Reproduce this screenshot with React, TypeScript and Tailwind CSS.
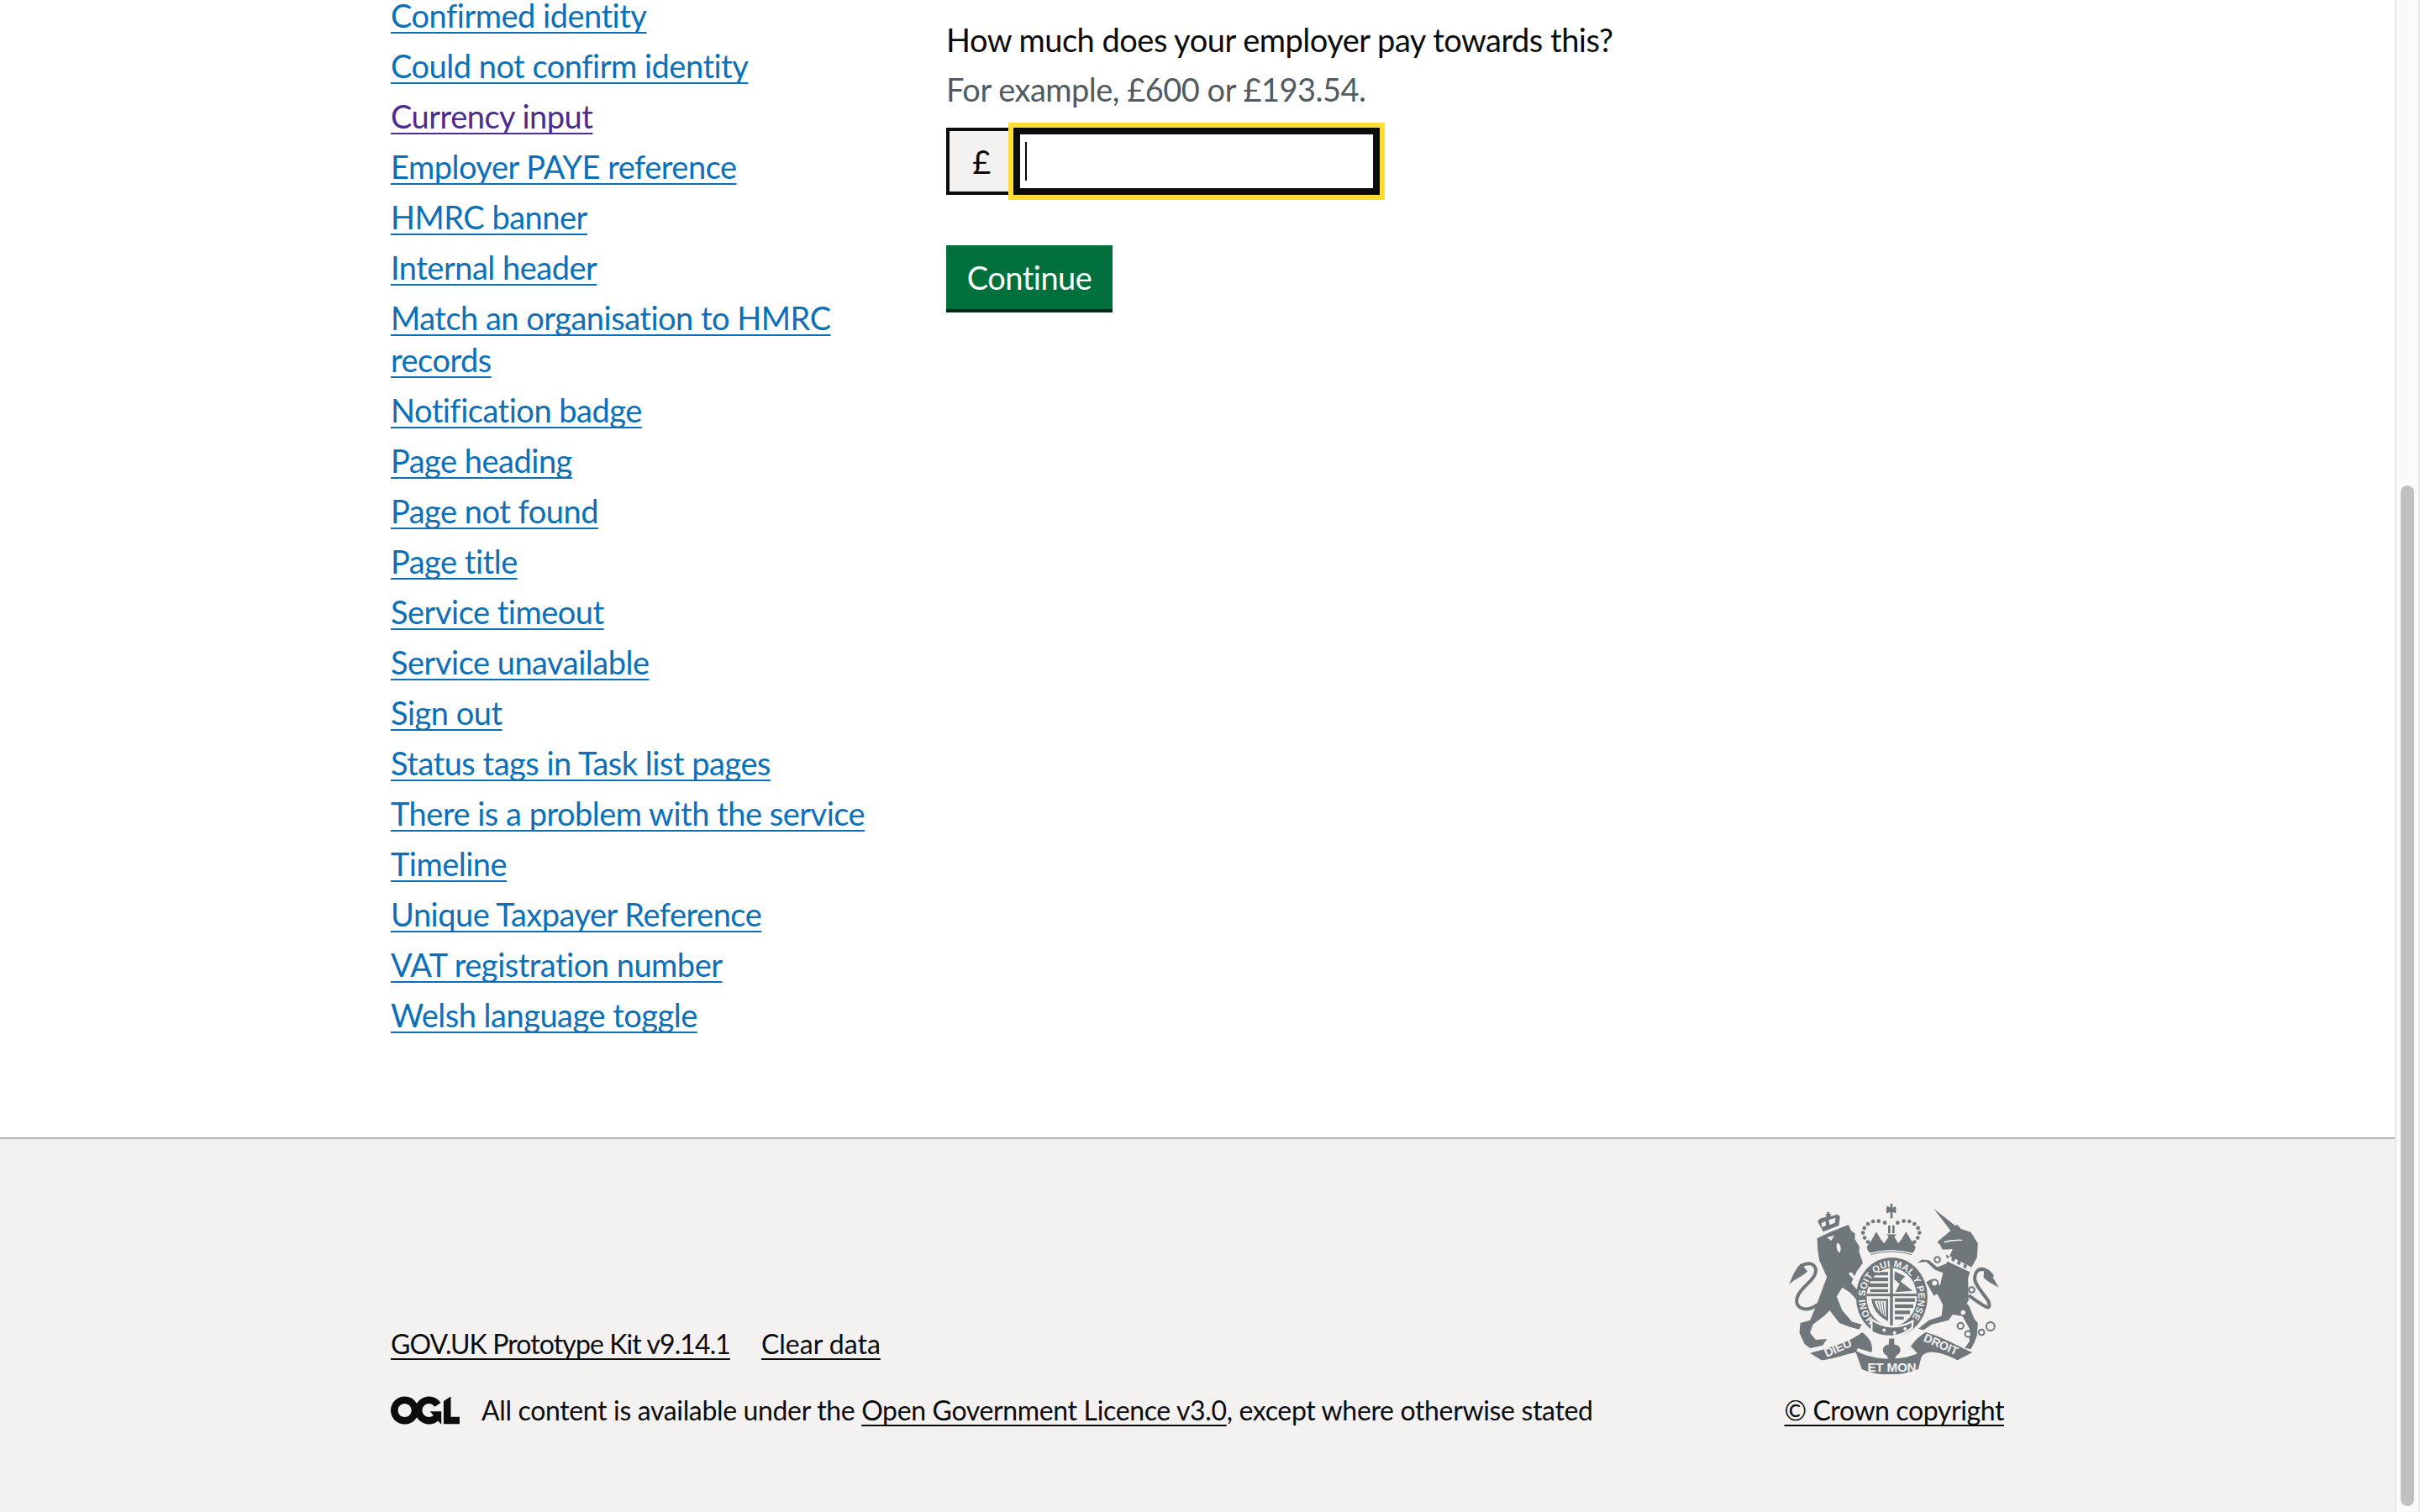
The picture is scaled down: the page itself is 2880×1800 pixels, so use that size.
const links: { label: string; visited?: boolean }[] = [
  { label: "Confirmed identity" },
  { label: "Could not confirm identity" },
  { label: "Currency input", visited: true },
  { label: "Employer PAYE reference" },
  { label: "HMRC banner" },
  { label: "Internal header" },
  { label: "Match an organisation to HMRC records" },
  { label: "Notification badge" },
  { label: "Page heading" },
  { label: "Page not found" },
  { label: "Page title" },
  { label: "Service timeout" },
  { label: "Service unavailable" },
  { label: "Sign out" },
  { label: "Status tags in Task list pages" },
  { label: "There is a problem with the service" },
  { label: "Timeline" },
  { label: "Unique Taxpayer Reference" },
  { label: "VAT registration number" },
  { label: "Welsh language toggle" },
];

const footerLink = "underline decoration-[2px] underline-offset-[5px] [text-decoration-skip-ink:none]";

function OglLogo() {
  return (
    <svg viewBox="0 0 483.2 195.7" className="h-[34px] w-[82px] shrink-0 text-[#0b0c0c]">
      <path
        fill="currentColor"
        d="M421.5 142.8V.1l-50.7 32.3v161.1h112.4v-50.7zm-122.3-9.6A47.12 47.12 0 0 1 221 97.8c0-26 21.1-47.1 47.1-47.1 16.7 0 31.4 8.7 39.7 21.8l42.7-27.2A97.63 97.63 0 0 0 268.1 0c-36.5 0-68.3 20.1-85.1 49.7A98 98 0 0 0 97.8 0C43.9 0 0 43.9 0 97.8s43.9 97.8 97.8 97.8c36.5 0 68.3-20.1 85.1-49.7a97.76 97.76 0 0 0 149.6 25.4l19.4 22.2h3v-87.8h-80l24.3 27.5zM97.8 145c-26 0-47.1-21.1-47.1-47.1s21.1-47.1 47.1-47.1 47.2 21 47.2 47S123.8 145 97.8 145"
      />
    </svg>
  );
}

function Crest() {
  const dark = "#6f777b";
  const light = "#f3f2f1";
  const crownDots = [
    [492, 176], [470, 170], [450, 171], [432, 180], [419, 195], [414, 212], [420, 230], [432, 245],
    [538, 176], [560, 170], [580, 171], [598, 180], [611, 195], [616, 212], [610, 230], [598, 245],
  ];
  const chain = [
    [680, 308, 10], [670, 392, 12], [803, 416, 10], [763, 545, 11], [790, 574, 11], [838, 568, 10], [870, 547, 15],
  ];
  return (
    <svg viewBox="150 108 750 610" className="h-[203px] w-[250px]">
      {/* lion */}
      <path
        fill={dark}
        d="M250 232 L300 208 L362 183 L372 205 L386 215 L385 235 L402 262 L400 280 L414 320 L392 350 L372 392 L395 418 L415 450 L412 466 L395 456 L368 426 L340 408 L320 440 L340 490 L375 530 L410 540 L400 558 L365 548 L330 535 L295 490 L275 510 L235 540 L225 570 L245 595 L285 592 L270 615 L225 625 L205 610 L187 570 L190 535 L225 525 L250 465 L285 370 L258 310 L252 270 Z"
      />
      <path fill="none" stroke={dark} strokeWidth="12" d="M252 468 C210 500 165 482 180 440 C195 400 250 380 245 342 C240 315 200 315 182 345" />
      <path fill={dark} d="M192 322 C170 345 160 370 150 398 C170 375 195 372 216 350 Z" />
      <path fill={light} d="M285 228 L312 222 L300 240 Z M322 248 C334 250 338 270 332 282 C322 284 316 262 322 248 Z" />
      <path fill={light} d="M362 358 L372 352 L412 400 L408 408 Z" />
      <path
        fill={dark}
        d="M252 172 C262 152 276 162 285 152 L279 146 L286 144 L286 137 L294 137 L294 144 L302 146 L296 152 C310 156 320 138 332 154 L328 186 L272 208 Z"
      />
      <path fill={light} d="M265 178 L280 170 L282 186 L268 192 Z M292 166 L316 158 L314 176 L294 184 Z" />

      {/* crown */}
      <path fill={dark} d="M506 118 L512 122 L512 108 L520 108 L520 122 L532 118 L532 142 L520 138 L520 160 L512 160 L512 138 L498 142 L498 118 Z" />
      <rect x="504" y="186" width="8" height="28" fill={dark} />
      <rect x="519" y="186" width="8" height="28" fill={dark} />
      {crownDots.map(([cx, cy]) => (
        <circle key={`${cx}-${cy}`} cx={cx} cy={cy} r="7" fill={dark} />
      ))}
      <path
        fill={dark}
        d="M428 262 L445 238 L462 208 L478 236 L490 250 L506 226 L498 218 L534 218 L526 226 L540 250 L552 236 L568 208 L586 238 L602 262 Q600 280 590 284 Q515 262 440 284 Q430 280 428 262 Z"
      />
      <path fill="none" stroke={dark} strokeWidth="3" d="M442 290 Q515 268 588 290" />

      {/* garter and shield */}
      <ellipse cx="517" cy="442" rx="128" ry="142" fill={dark} />
      <ellipse cx="517" cy="442" rx="90" ry="104" fill={light} />
      <rect x="511" y="338" width="10" height="208" fill={dark} />
      <rect x="427" y="430" width="180" height="9" fill={dark} />
      <g fill={dark}>
        <rect x="458" y="352" width="46" height="12" />
        <rect x="438" y="372" width="66" height="13" />
        <rect x="434" y="393" width="70" height="13" />
        <rect x="440" y="414" width="64" height="10" />
        <path d="M528 350 L565 368 L548 386 L592 420 L530 424 L545 395 L526 378 Z" />
        <rect x="528" y="446" width="72" height="13" />
        <rect x="528" y="468" width="66" height="13" />
        <rect x="528" y="490" width="54" height="13" />
        <rect x="528" y="512" width="32" height="10" />
      </g>
      <path fill={dark} d="M444 448 H504 V528 C475 515 450 490 444 448 Z" />
      <path fill={light} d="M456 456 L496 456 L496 512 C475 500 462 480 456 456 Z" />
      <path fill="none" stroke={dark} strokeWidth="3" d="M466 458 L478 502 M476 458 L486 506 M486 458 L491 506" />
      <path id="garter-arc" fill="none" d="M456 527 A95 109 0 1 1 578 527" />
      <text fill={light} fontSize="34" fontWeight="700" fontFamily="Liberation Sans, sans-serif">
        <textPath href="#garter-arc" textLength="490" lengthAdjust="spacing">
          HONI SOIT QUI MAL Y PENSE
        </textPath>
      </text>
      <path fill={dark} stroke={light} strokeWidth="7" d="M445 522 C490 555 545 555 592 528 L590 552 C545 590 490 590 445 566 Z" />
      <circle cx="490" cy="560" r="6" fill={light} />
      <circle cx="527" cy="570" r="6" fill={light} />
      <circle cx="565" cy="556" r="6" fill={light} />

      {/* unicorn */}
      <path fill={dark} d="M667 125 L748 190 L728 205 Z" />
      <path
        fill={dark}
        d="M680 245 L726 206 L750 182 L765 198 L800 210 L825 250 L822 300 L800 340 L790 375 L792 470 L812 520 L825 535 L822 580 L812 605 L800 628 L778 625 L795 600 L795 555 L770 510 L735 505 L720 525 L660 540 L630 560 L612 555 L650 525 L695 510 L700 470 L680 430 L668 438 L640 388 L660 378 L690 400 L700 355 L672 345 L640 315 L608 320 L625 308 L650 310 L680 335 L712 322 L735 270 L715 272 L698 272 L690 255 Z"
      />
      <path fill={light} d="M706 286 L802 335 L796 352 L702 308 Z" />
      <path fill={dark} d="M712 290 L722 296 L720 304 L712 300 Z M732 298 L744 304 L740 316 L730 310 Z M754 310 L764 316 L760 328 L750 322 Z M776 322 L786 328 L782 340 L772 334 Z" />
      <path fill="none" stroke={light} strokeWidth="5" d="M705 245 L730 240 C750 240 765 235 768 240" />
      {chain.map(([cx, cy, r]) => (
        <circle key={`${cx}-${cy}`} cx={cx} cy={cy} r={r} fill={light} stroke={dark} strokeWidth="6" />
      ))}
      <circle cx="772" cy="497" r="8" fill={light} />
      <circle cx="795" cy="463" r="8" fill={light} />
      <path fill="none" stroke={dark} strokeWidth="12" d="M792 436 C835 465 880 505 862 455 C830 410 800 385 820 352 C835 332 865 345 878 370" />
      <path fill={dark} d="M848 338 C870 348 885 385 900 408 C880 396 860 388 845 372 Z" />

      {/* motto */}
      <path fill={dark} d="M225 642 C290 625 365 605 412 568 C440 590 452 615 445 640 L395 625 L388 640 C340 650 290 668 265 668 Z" />
      <path fill={dark} d="M386 632 C455 672 565 672 628 634 L612 700 C545 726 470 726 410 700 Z" />
      <path fill={dark} d="M585 618 C605 590 625 575 640 568 C700 585 760 622 805 640 L752 668 C700 640 640 625 622 658 Z" />
      <path fill={dark} d="M508 590 L526 590 L526 612 C550 612 556 640 535 650 L524 668 L508 668 L498 650 C478 640 484 612 506 612 Z" />
      <g fontFamily="Liberation Sans, sans-serif" fontWeight="700" fill={light}>
        <text x="430" y="708" fontSize="46" textLength="175">ET MON</text>
        <text x="284" y="658" fontSize="44" textLength="102" transform="rotate(-24 284 658)">DIEU</text>
        <text x="628" y="598" fontSize="42" textLength="130" transform="rotate(24 628 598)">DROIT</text>
      </g>
    </svg>
  );
}

export default function App() {
  return (
    <div className="flex h-screen overflow-hidden bg-white font-['Lato','Liberation_Sans',sans-serif] text-[#0b0c0c]">
      <div className="flex min-w-0 flex-1 flex-col">
        {/* Main */}
        <main className="flex h-[1354px] shrink-0 pl-[465px] text-[38px] leading-[50px] tracking-[-0.5px]">
          <nav className="w-[661px] shrink-0 pr-[61px]">
            <ul className="-mt-[7px] flex flex-col gap-[10px]">
              {links.map((link) => (
                <li key={link.label}>
                  <a
                    href="#"
                    className={`underline decoration-[2px] underline-offset-[5px] [text-decoration-skip-ink:none] ${
                      link.visited ? "text-[#4c2c92]" : "text-[#0b70b9]"
                    }`}
                  >
                    {link.label}
                  </a>
                </li>
              ))}
            </ul>
          </nav>

          <form className="pt-[22px]">
            <label className="block">How much does your employer pay towards this?</label>
            <p className="mt-[9px] text-[#505a5f]">For example, £600 or £193.54.</p>
            <div className="mt-[21px] flex h-[80px]">
              <div className="flex w-[80px] items-center justify-center border-[4px] border-r-0 border-[#0b0c0c] bg-[#f3f2f1]">
                £
              </div>
              <div className="flex w-[436px] items-center border-[8px] border-[#0b0c0c] bg-white pl-[6px] outline-[6px] outline-[#ffdd33]">
                <span className="h-[46px] w-[2px] bg-[#0b0c0c]" />
              </div>
            </div>
            <button
              type="button"
              className="mt-[60px] flex h-[76px] w-[198px] items-center justify-center bg-[#00703c] text-white shadow-[0_4px_0_#002d18]"
            >
              Continue
            </button>
          </form>
        </main>

        {/* Footer */}
        <footer className="flex flex-1 items-end justify-between border-t-2 border-[#b1b4b6] bg-[#f3f2f1] pb-[101px] pl-[465px] pr-[465px] text-[32px] leading-[40px]">
          <div className="flex flex-col gap-[39px]">
            <div className="flex gap-[37px]">
              <a href="#" className={`${footerLink} tracking-[-0.9px]`}>
                GOV.UK Prototype Kit v9.14.1
              </a>
              <a href="#" className={footerLink}>
                Clear data
              </a>
            </div>
            <div className="flex items-center gap-[26px] tracking-[-0.35px]">
              <OglLogo />
              <span>
                All content is available under the{" "}
                <a href="#" className={footerLink}>
                  Open Government Licence v3.0
                </a>
                , except where otherwise stated
              </span>
            </div>
          </div>
          <div className="flex flex-col items-center gap-[23px]">
            <Crest />
            <a href="#" className={`${footerLink} tracking-[-0.4px]`}>
              © Crown copyright
            </a>
          </div>
        </footer>
      </div>

      {/* Scrollbar */}
      <div className="flex w-[30px] shrink-0 justify-center border-x-2 border-[#e8e8e8] bg-[#fafafa] pb-[7px] pt-[578px]">
        <div className="w-[16px] rounded-full bg-[#c1c1c1]" />
      </div>
    </div>
  );
}
